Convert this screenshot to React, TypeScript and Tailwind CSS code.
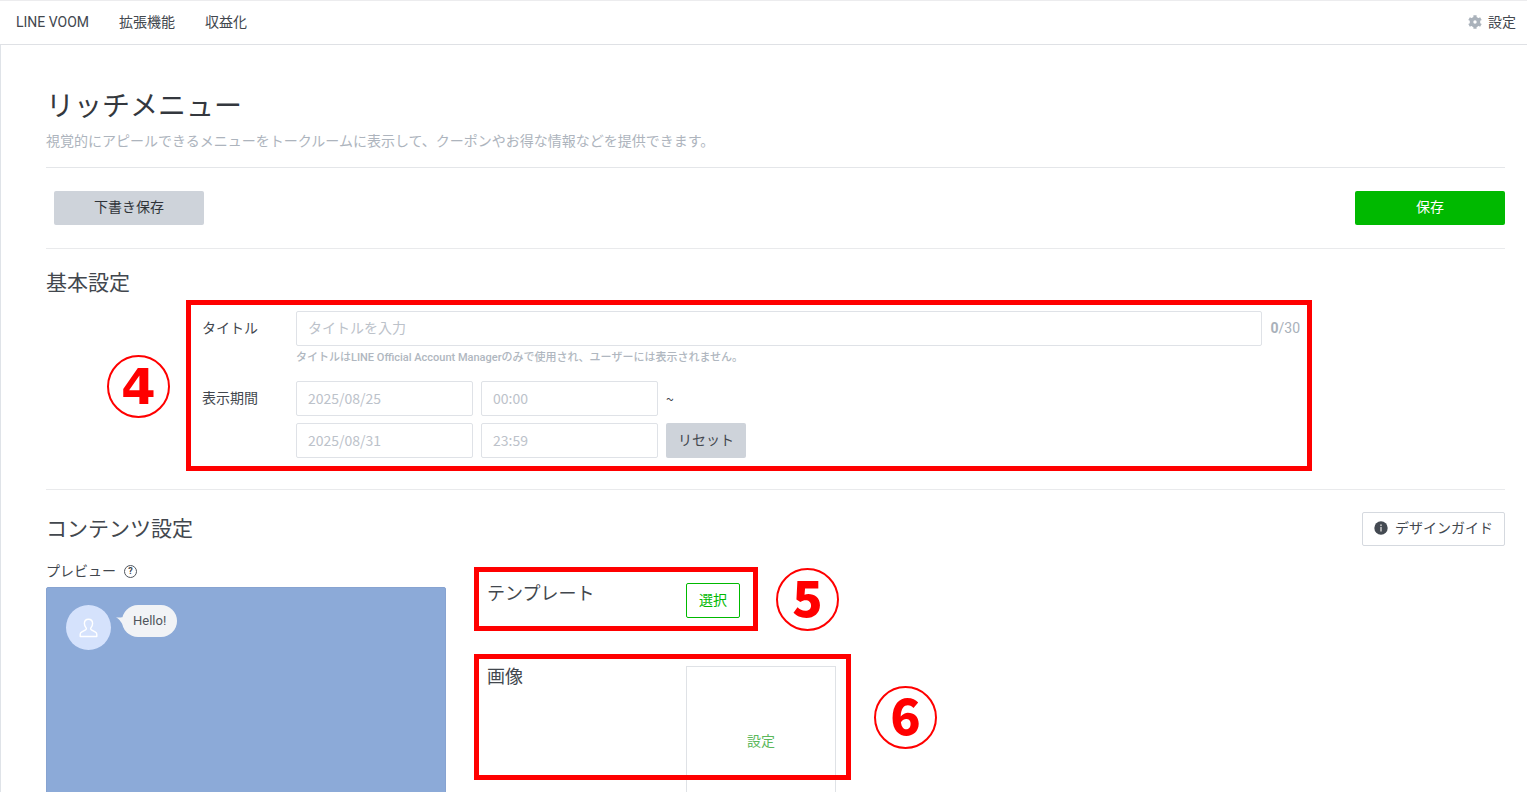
import React from 'react';
import clsx from 'clsx';

const NAV_ITEMS = ['LINE VOOM', '拡張機能', '収益化'];

const inputClass =
  'h-[35px] rounded-xs border border-[#dfe2e7] bg-white px-[11px] pb-0.5 text-sm text-gray-700 placeholder:text-[#bcc2ca] placeholder:opacity-100';

const cjkClass = "font-['Noto_Sans_CJK_JP',sans-serif]";

// Red frame drawn on top of the part being explained
function Frame({ className }: { className: string }) {
  return (
    <div
      className={clsx('pointer-events-none absolute z-10 border-[5px] border-[#ff0000]', className)}
    />
  );
}

// Step number in a circle, placed next to its frame
function Step({ children, className }: { children: React.ReactNode; className: string }) {
  return (
    <div
      className={clsx(
        'absolute flex size-[63px] items-center justify-center rounded-full border-2 border-[#ff0000] text-[50px] leading-none text-[#ff0000]',
        className,
      )}
    >
      {children}
    </div>
  );
}

// Six teeth round a ring
function GearIcon() {
  return (
    <svg width="14" height="14" viewBox="0 0 14 14" stroke="#aab2bb" fill="none" aria-hidden="true">
      <circle cx="7" cy="7" r="3.5" strokeWidth="3.6" />
      <path
        d="M7 .2v2.6M7 11.2v2.6M1.1 3.6l2.3 1.3M10.6 9.1l2.3 1.3M1.1 10.4l2.3-1.3M10.6 4.9l2.3-1.3"
        strokeWidth="3.2"
      />
    </svg>
  );
}

function InfoIcon() {
  return (
    <svg width="14" height="14" viewBox="0 0 14 14" aria-hidden="true">
      <circle cx="7" cy="7" r="6.7" fill="#444a52" />
      <rect x="6.2" y="3.4" width="1.6" height="1.6" fill="#c4c4c4" />
      <rect x="6.2" y="5.9" width="1.6" height="4.6" fill="#c4c4c4" />
    </svg>
  );
}

function UserIcon() {
  return (
    <svg width="19" height="20" viewBox="0 0 19 20" fill="none" stroke="#fff" aria-hidden="true">
      <path
        d="M9.5 1.2c-2.5 0-4.1 1.8-4.1 4.2 0 2 .9 3.3 1.7 4.4.5.7.3 1.7-.5 2.1l-3.7 2c-1.1.6-1.7 1.2-1.7 2.4v2.2h16.6v-2.2c0-1.2-.6-1.8-1.7-2.4l-3.7-2c-.8-.4-1-1.4-.5-2.1.8-1.1 1.7-2.4 1.7-4.4 0-2.4-1.6-4.2-4.1-4.2Z"
        strokeWidth="1.4"
        strokeLinejoin="round"
      />
    </svg>
  );
}

function Header() {
  return (
    <header className="flex h-[45px] items-center justify-between border-t border-b border-t-[#ececee] border-b-[#dfe1e5] pr-[11px] pb-0.5 pl-4 text-sm">
      <nav className="flex gap-[30px]">
        {NAV_ITEMS.map((item) => (
          <a key={item} href="#">
            {item}
          </a>
        ))}
      </nav>
      <a href="#" className="flex items-center gap-1.5">
        <GearIcon />
        設定
      </a>
    </header>
  );
}

function BasicSettings() {
  return (
    <section className="border-b border-[#e9eaec] pt-5 pb-[31px]">
      <h2 className="text-[21px] leading-7">基本設定</h2>
      <div className="relative mt-3.5 mr-[205px] ml-[156px] text-sm">
        <Frame className="-top-[11px] -right-3 -bottom-[13px] -left-4" />
        <Step className="top-11 -left-[95px] font-['DejaVu_Sans',sans-serif] font-bold">4</Step>

        <div className="flex">
          <label htmlFor="title" className="w-[94px] shrink-0 leading-[35px]">
            タイトル
          </label>
          <div className="flex-1">
            <div className="flex items-center gap-2">
              <input
                id="title"
                type="text"
                placeholder="タイトルを入力"
                className={clsx(inputClass, 'min-w-0 flex-1')}
              />
              <span className="pb-0.5 text-[#a9b1ba]">
                <b>0</b>/30
              </span>
            </div>
            <p className="mt-1 text-[11px] leading-4 font-medium text-[#b0b7c0]">
              タイトルはLINE Official Account Managerのみで使用され、ユーザーには表示されません。
            </p>
          </div>
        </div>

        <div className="mt-[15px] flex">
          <label htmlFor="start-date" className="w-[94px] shrink-0 leading-[35px]">
            表示期間
          </label>
          <div className={clsx('flex flex-col gap-[7px]', cjkClass)}>
            <div className="flex items-center gap-2">
              <input
                id="start-date"
                type="text"
                placeholder="2025/08/25"
                className={clsx(inputClass, 'w-[177px]')}
              />
              <input
                type="text"
                aria-label="開始時刻"
                placeholder="00:00"
                className={clsx(inputClass, 'w-[177px]')}
              />
              <span>~</span>
            </div>
            <div className="flex items-center gap-2">
              <input
                type="text"
                aria-label="終了日"
                placeholder="2025/08/31"
                className={clsx(inputClass, 'w-[177px]')}
              />
              <input
                type="text"
                aria-label="終了時刻"
                placeholder="23:59"
                className={clsx(inputClass, 'w-[177px]')}
              />
              <button type="button" className="h-[35px] rounded-xs bg-[#ced3da] px-3 pb-[3px]">
                リセット
              </button>
            </div>
          </div>
        </div>
      </div>
    </section>
  );
}

function Preview() {
  return (
    <div className="w-[400px] shrink-0">
      <div className="flex items-center gap-2 text-sm leading-5">
        プレビュー
        <button
          type="button"
          aria-label="ヘルプ"
          className="flex size-[13px] items-center justify-center rounded-full border border-[#50565e] text-[9px] leading-none font-bold"
        >
          ?
        </button>
      </div>
      <div className="mt-1.5 flex h-[420px] items-start gap-[11px] rounded-xs border border-[#87a3d1] bg-[#8caad8] px-[19px] py-[17px]">
        <div className="flex size-[45px] items-center justify-center rounded-full bg-[#d5e2fc]">
          <UserIcon />
        </div>
        <div className="relative flex h-8 items-center rounded-2xl bg-[#f1f3f6] px-[11px] text-[13px] text-[#50555c]">
          <svg
            width="10"
            height="10"
            viewBox="0 0 10 10"
            className="absolute top-3 -left-1.5"
            aria-hidden="true"
          >
            <path d="M0 .3C4 .8 6 .4 8 0v8.5C5 6.5 4.5 2.6 0 .3Z" fill="#f1f3f6" />
          </svg>
          Hello!
        </div>
      </div>
    </div>
  );
}

function ContentSettings() {
  return (
    <section className="pt-[22px]">
      <div className="flex items-center justify-between">
        <h2 className="text-[21px] leading-7">コンテンツ設定</h2>
        <button
          type="button"
          className="flex h-[34px] items-center gap-[7px] rounded-xs border border-[#d5d9df] px-[11px] pb-0.5 text-sm"
        >
          <InfoIcon />
          デザインガイド
        </button>
      </div>
      <div className="flex gap-[41px] pt-[15px]">
        <Preview />
        <div className="flex flex-col items-start pt-[22px]">
          <div className="relative flex">
            <Frame className="-top-4 -right-[18px] -bottom-[13px] -left-[13px]" />
            <Step className={clsx('-top-[15px] left-[289px] pb-2.5 font-black', cjkClass)}>5</Step>
            <h3 className="w-[199px] text-lg leading-[22px]">テンプレート</h3>
            <button
              type="button"
              className="h-[35px] rounded-xs border border-[#00b900] px-3 pb-0.5 text-sm text-[#00b900]"
            >
              選択
            </button>
          </div>
          <div className="relative mt-12 flex">
            <Frame className="-top-3 -right-[15px] -left-[13px] h-[126px]" />
            <Step className={clsx('top-5 left-[387px] pb-2.5 font-black', cjkClass)}>6</Step>
            <h3 className="w-[199px] text-lg leading-[22px]">画像</h3>
            <button
              type="button"
              className="size-[150px] border border-[#dfe2e6] text-sm text-[#5cb85c]"
            >
              設定
            </button>
          </div>
        </div>
      </div>
    </section>
  );
}

export default function App() {
  return (
    <div className="h-screen overflow-hidden bg-white pr-2.5 font-[Roboto,'Noto_Sans_CJK_JP',sans-serif] text-[#42474e]">
      <Header />
      <main className="border-l border-[#dfe3e8] pt-11 pr-[22px] pl-[45px]">
        <div className="border-b border-[#e4e6e9] pb-4">
          <h1 className="text-[28px] leading-9 text-[#34383e]">リッチメニュー</h1>
          <p className="mt-1.5 text-sm leading-5 text-[#adb4bd]">
            視覚的にアピールできるメニューをトークルームに表示して、クーポンやお得な情報などを提供できます。
          </p>
        </div>
        <div className="flex justify-between border-b border-[#e9eaec] py-[23px] pl-2 text-sm">
          <button
            type="button"
            className="h-[34px] w-[150px] rounded-xs bg-[#ced3da] pb-[3px] text-[#303439]"
          >
            下書き保存
          </button>
          <button
            type="button"
            className="h-[34px] w-[150px] rounded-xs bg-[#00b900] pb-[3px] text-white"
          >
            保存
          </button>
        </div>
        <BasicSettings />
        <ContentSettings />
      </main>
    </div>
  );
}
